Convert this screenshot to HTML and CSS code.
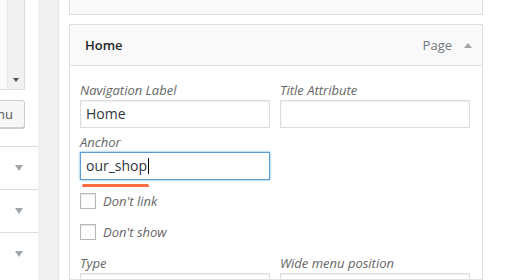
FILE: index.html
```html
<!DOCTYPE html>
<html>
<head>
<meta charset="utf-8">
<link rel="stylesheet" href="styles.css">
</head>
<body>
<div class="screen">
  <aside class="side">
    <div class="side-inner">
      <div class="listbox"><div class="scrollbar"><span class="sb-arrow"></span></div></div>
      <div class="btn-row"><button class="btn">Add to Menu</button></div>
      <div class="acc">
        <div class="acc-row"><span class="acc-arrow"></span></div>
        <div class="acc-row"><span class="acc-arrow"></span></div>
        <div class="acc-row"><span class="acc-arrow"></span></div>
      </div>
    </div>
  </aside>
  <div class="gutter"></div>
  <main class="manage">
    <div class="item item-prev">
      <div class="item-bar"><span class="item-title">About</span><span class="item-type">Page</span><span class="item-toggle down"></span></div>
    </div>
    <div class="item">
      <div class="item-bar"><span class="item-title">Home</span><span class="item-type">Page</span><span class="item-toggle"></span></div>
      <div class="item-body">
        <div class="grid">
          <div class="field"><div class="lbl">Navigation Label</div><div class="inp">Home</div></div>
          <div class="field"><div class="lbl">Title Attribute</div><div class="inp"></div></div>
        </div>
        <div class="grid">
          <div class="field"><div class="lbl">Anchor</div><div class="inp focus">our_shop<span class="caret"></span></div></div>
        </div>
        <div class="mark"></div>
        <div class="checks">
          <label class="check"><span class="cb"></span><span class="cb-text">Don't link</span></label>
          <label class="check"><span class="cb"></span><span class="cb-text">Don't show</span></label>
        </div>
        <div class="grid grid-last">
          <div class="field"><div class="lbl">Type</div><div class="inp"></div></div>
          <div class="field"><div class="lbl">Wide menu position</div><div class="inp"></div></div>
        </div>
      </div>
    </div>
  </main>
</div>
</body>
</html>
```
FILE: styles.css
```css
* { box-sizing: border-box; }
html, body {
  margin: 0;
  height: 280px;
  overflow: hidden;
  background: #fff;
  font-family: "Open Sans", "Liberation Sans", sans-serif;
  font-size: 13px;
}
.screen { display: flex; height: 280px; }

/* left column (clipped) */
.side {
  width: 38px;
  flex: none;
  display: flex;
  justify-content: flex-end;
  overflow: hidden;
  background: #fff;
}
.side-inner { width: 280px; flex: none; display: flex; flex-direction: column; }
.listbox {
  margin-top: -10px;
  height: 100px;
  margin-right: 13px;
  border: 1px solid #ddd;
  background: #fbfbfb;
  display: flex;
  justify-content: flex-end;
}
.scrollbar {
  width: 17px;
  background: #f1f1f1;
  border-left: 1px solid #e9e9e9;
  display: flex;
  align-items: flex-end;
  justify-content: center;
  padding-bottom: 7px;
}
.sb-arrow {
  border-top: 4px solid #505050;
  border-left: 3px solid transparent;
  border-right: 3px solid transparent;
}
.btn-row { margin-top: 10px; margin-right: 13px; display: flex; justify-content: flex-end; }
.btn {
  height: 28px;
  padding: 0 11px;
  border: 1px solid #ccc;
  border-radius: 3px;
  background: #f7f7f7;
  color: #555;
  font: 13px "Open Sans", sans-serif;
  box-shadow: 0 1px 0 #ccc;
}
.acc { margin-top: 18px; }
.acc-row {
  height: 43px;
  border-top: 1px solid #ddd;
  display: flex;
  align-items: center;
  justify-content: flex-end;
  padding-right: 15px;
}
.acc-arrow {
  border-top: 6px solid #a0a5aa;
  border-left: 4px solid transparent;
  border-right: 4px solid transparent;
}

.gutter { width: 20px; flex: none; background: #f1f1f1; }

/* menu management */
.manage {
  flex: 1;
  border-left: 1px solid #e5e5e5;
  padding-left: 10px;
  background: #fff;
}
.item { width: 414px; }
.item-prev { margin-top: -27px; margin-bottom: 9px; }
.item-prev .item-bar { padding-bottom: 5px; }
.item-bar {
  height: 42px;
  border: 1px solid #dfdfdf;
  background: #f9f9f9;
  display: flex;
  align-items: center;
  padding: 0 10px 0 15px;
}
.item-title { flex: 1; font-weight: 600; color: #23282d; }
.item-type { color: #72777c; }
.item-toggle {
  margin-left: 12px;
  border-bottom: 5px solid #a0a5aa;
  border-left: 4px solid transparent;
  border-right: 4px solid transparent;
}
.item-toggle.down { border-bottom: 0; border-top: 5px solid #a0a5aa; }

.item-body {
  border: 1px solid #dfdfdf;
  border-top: 0;
  padding: 15px 12px 0 10px;
  height: 214px;
  overflow: hidden;
}
.grid {
  display: grid;
  grid-template-columns: 190px 190px;
  column-gap: 10px;
}
.field { margin-bottom: 5px; }
.lbl {
  line-height: 19px;
  height: 19px;
  font-style: italic;
  color: #666;
}
.inp {
  height: 28px;
  border: 1px solid #ddd;
  box-shadow: inset 0 1px 2px rgba(0, 0, 0, .07);
  background: #fff;
  color: #32373c;
  font-size: 14px;
  line-height: 26px;
  padding: 0 5px;
}
.inp.focus {
  border-color: #5b9dd9;
  box-shadow: 0 0 2px rgba(30, 140, 190, .8);
}
.caret {
  display: inline-block;
  width: 1px;
  height: 16px;
  background: #000;
  vertical-align: -3px;
  margin-left: 1px;
}
.grid + .mark { margin-top: -1px; }
.mark {
  width: 67px;
  height: 3px;
  margin-left: 2px;
  background: #f96d41;
  border-radius: 2px;
}
.checks { margin-top: 6px; display: flex; flex-direction: column; gap: 15px; }
.check { display: flex; align-items: center; gap: 7px; height: 16px; }
.cb {
  width: 16px;
  height: 16px;
  border: 1px solid #b4b9be;
  background: #fff;
  box-shadow: inset 0 1px 2px rgba(0, 0, 0, .1);
}
.cb-text { font-style: italic; color: #666; }
.grid-last { margin-top: 14px; }
```
